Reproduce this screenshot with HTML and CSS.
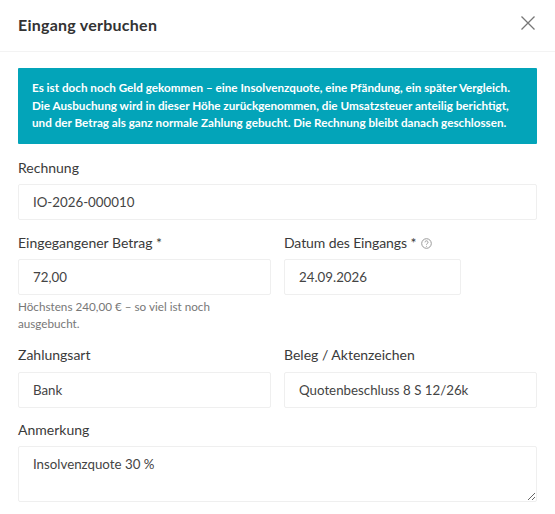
FILE: index.html
```html
<!DOCTYPE html>
<html lang="de">
<head>
<meta charset="utf-8">
<title>Eingang verbuchen</title>
<link rel="stylesheet" href="styles.css">
</head>
<body>
<div class="modal">
  <header class="modal-header">
    <h2 class="modal-title">Eingang verbuchen</h2>
    <svg class="close" width="14" height="14" viewBox="0 0 14 14" aria-label="Schließen"><path d="M.5.5l13 13M13.500.5l-13 13"/></svg>
  </header>
  <div class="modal-body">
    <div class="alert">Es ist doch noch Geld gekommen – eine Insolvenzquote, eine Pfändung, ein später Vergleich. Die Ausbuchung wird in dieser Höhe zurückgenommen, die Umsatzsteuer anteilig berichtigt, und der Betrag als ganz normale Zahlung gebucht. Die Rechnung bleibt danach geschlossen.</div>
    <div class="field field-rechnung">
      <label class="label">Rechnung</label>
      <input class="input" value="IO-2026-000010">
    </div>
    <div class="grid grid-amount">
      <div class="field">
        <label class="label">Eingegangener Betrag *</label>
        <input class="input" value="72,00">
        <p class="hint">Höchstens 240,00 € – so viel ist noch ausgebucht.</p>
      </div>
      <div class="field">
        <label class="label label-date">Datum des Eingangs *
          <svg class="help" width="11" height="11" viewBox="0 0 11 11"><circle cx="5.5" cy="5.500" r="4.800"/><path d="M4 4.300a1.500 1.500 0 1 1 2.300 1.300c-.6.400-.8.600-.8 1.100"/><circle class="dot" cx="5.500" cy="8.200" r=".5"/></svg>
        </label>
        <input class="input input-date" value="24.09.2026">
      </div>
    </div>
    <div class="grid grid-pay">
      <div class="field">
        <label class="label">Zahlungsart</label>
        <input class="input" value="Bank">
      </div>
      <div class="field">
        <label class="label">Beleg / Aktenzeichen</label>
        <input class="input" value="Quotenbeschluss 8 S 12/26k">
      </div>
    </div>
    <div class="field field-note">
      <label class="label">Anmerkung</label>
      <textarea class="input textarea">Insolvenzquote 30 %</textarea>
    </div>
  </div>
</div>
</body>
</html>
```
FILE: styles.css
```css
* { box-sizing: border-box; }
html, body { margin: 0; height: 100%; overflow: hidden; background: #fff; }
body { font-family: "Lato", "Noto Sans", sans-serif; color: #333; font-size: 14px; }
.modal-header { height: 52px; border-bottom: 1px solid #f3f3f3; display: flex; align-items: center; justify-content: space-between; padding: 0 20px 3px 18px; }
.modal-title { margin: 0; font-size: 16px; font-weight: 700; letter-spacing: .25px; color: #333; }
.close { stroke: #777; stroke-width: 1.300; fill: none; margin-top: -3px; }
.modal-body { padding: 16px 18px 0; }
.alert { background: #03a4b9; color: #fff; font-size: 11.700px; font-weight: 700; line-height: 17.500px; height: 76px; padding: 11px 14px; border-radius: 1px; }
.field { display: flex; flex-direction: column; align-items: stretch; min-width: 0; }
.field-rechnung { margin-top: 15px; }
.label { font-size: 14px; line-height: 18px; margin-bottom: 7px; color: #3a3a3a; }
.label-date { letter-spacing: -.1px; }
.input { height: 36px; width: 100%; border: 1px solid #efefef; border-radius: 2px; padding: 0 14px 1px; font: 13.300px "Lato", "Noto Sans", sans-serif; color: #444; background: #fff; outline: none; }
.input-date { width: 177px; }
.grid { display: grid; grid-template-columns: 253px 253px; column-gap: 13px; }
.grid-amount { margin-top: 14px; }
.grid-pay { margin-top: 14px; }
.grid-pay .label { margin-bottom: 8px; }
.hint { margin: 3px 0 0; font-size: 11.700px; line-height: 17px; color: #777; max-width: 235px; }
.help { stroke: #999; fill: none; vertical-align: -1px; margin-left: 1px; }
.help .dot { fill: #999; stroke: none; }
.field-note { margin-top: 13px; }
.textarea { height: 56px; padding: 9px 14px; resize: vertical; display: block; }
```
